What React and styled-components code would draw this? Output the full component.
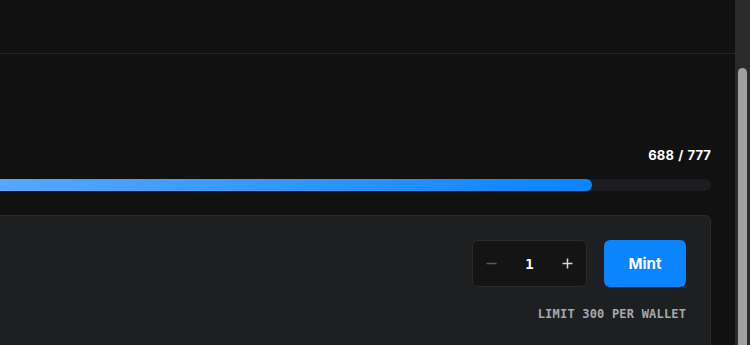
import React from "react";
import styled, { createGlobalStyle } from "styled-components";

const Global = createGlobalStyle`
  html, body { margin: 0; padding: 0; background: #111111; overflow: hidden; }
  body { font-family: Inter, "Noto Sans", sans-serif; color: #ffffff; }
  * { box-sizing: border-box; }
`;

const Viewport = styled.div`
  display: flex;
  width: 750px;
  height: 345px;
  overflow: hidden;
  background: #111111;
`;

const Page = styled.div`
  flex: 1;
  min-width: 0;
  display: flex;
  flex-direction: column;
  overflow: hidden;
`;

const Header = styled.header`
  flex-shrink: 0;
  height: 54px;
  border-bottom: 1px solid #242424;
`;

const Main = styled.main`
  display: flex;
  justify-content: flex-end;
  padding: 92px 24px 0 0;
`;

const Column = styled.div`
  flex-shrink: 0;
  width: 1035px;
  display: flex;
  flex-direction: column;
`;

const Count = styled.div`
  align-self: flex-end;
  font-family: Inter, "Liberation Sans", sans-serif;
  font-weight: 700;
  font-size: 13px;
  line-height: 18px;
  color: #ffffff;
  letter-spacing: 0.1px;
  word-spacing: 1px;
`;

const Track = styled.div`
  margin-top: 15px;
  height: 12px;
  border-radius: 6px;
  background: #1c1d20;
  overflow: hidden;
`;

const Fill = styled.div`
  height: 100%;
  border-radius: 6px;
  background: linear-gradient(90deg, #8cc4ff 0%, #5aa9ff 32%, #0a84ff 100%);
`;

const Card = styled.section`
  margin-top: 24px;
  height: 200px;
  border: 1px solid #2a2b2e;
  border-radius: 6px;
  background: #1e1f21;
  padding: 24px;
  display: flex;
  flex-direction: column;
  align-items: flex-end;
`;

const Controls = styled.div`
  display: flex;
  gap: 17px;
`;

const Stepper = styled.div`
  width: 115px;
  height: 47px;
  display: grid;
  grid-template-columns: 1fr 1fr 1fr;
  align-items: center;
  background: #141414;
  border: 1px solid #2a2b2d;
  border-radius: 6px;
`;

const StepButton = styled.button`
  background: none;
  border: none;
  padding: 0;
  display: flex;
  align-items: center;
  justify-content: center;
  color: ${(p) => (p.$muted ? "#5a5b5e" : "#d6d6d6")};
  cursor: pointer;
`;

const Qty = styled.span`
  text-align: center;
  font-family: "DejaVu Sans Mono", monospace;
  font-weight: 700;
  font-size: 14px;
  color: #ffffff;
`;

const MintButton = styled.button`
  width: 82px;
  height: 47px;
  border: none;
  border-radius: 6px;
  background: #0a84ff;
  color: #ffffff;
  font-family: Inter, "Liberation Sans", sans-serif;
  font-weight: 700;
  font-size: 15px;
  cursor: pointer;
`;

const Limit = styled.div`
  margin-top: 20px;
  font-family: "DejaVu Sans Mono", monospace;
  font-weight: 700;
  font-size: 12px;
  letter-spacing: 0.2px;
  margin-right: -0.2px;
  color: #a6a9ae;
`;

const Scrollbar = styled.div`
  flex-shrink: 0;
  width: 15px;
  height: 345px;
  background: #2b2b2b;
  padding: 68px 3px 0 3px;
`;

const Thumb = styled.div`
  height: 320px;
  background: #a0a0a0;
  border-radius: 5px 5px 0 0;
`;

export default function App() {
  const minted = 688;
  const total = 777;
  return (
    <>
      <Global />
      <Viewport>
        <Page>
          <Header />
          <Main>
            <Column>
              <Count>
                {minted} / {total}
              </Count>
              <Track>
                <Fill style={{ width: `${(minted / total) * 100}%` }} />
              </Track>
              <Card>
                <Controls>
                  <Stepper>
                    <StepButton $muted aria-label="decrease">
                      <svg width="11" height="11" viewBox="0 0 11 11">
                        <path d="M0.5 5.5h10" stroke="currentColor" strokeWidth="1.5" />
                      </svg>
                    </StepButton>
                    <Qty>1</Qty>
                    <StepButton aria-label="increase">
                      <svg width="11" height="11" viewBox="0 0 11 11">
                        <path d="M0.5 5.5h10M5.5 0.5v10" stroke="currentColor" strokeWidth="1.5" />
                      </svg>
                    </StepButton>
                  </Stepper>
                  <MintButton>Mint</MintButton>
                </Controls>
                <Limit>LIMIT 300 PER WALLET</Limit>
              </Card>
            </Column>
          </Main>
        </Page>
        <Scrollbar>
          <Thumb />
        </Scrollbar>
      </Viewport>
    </>
  );
}
